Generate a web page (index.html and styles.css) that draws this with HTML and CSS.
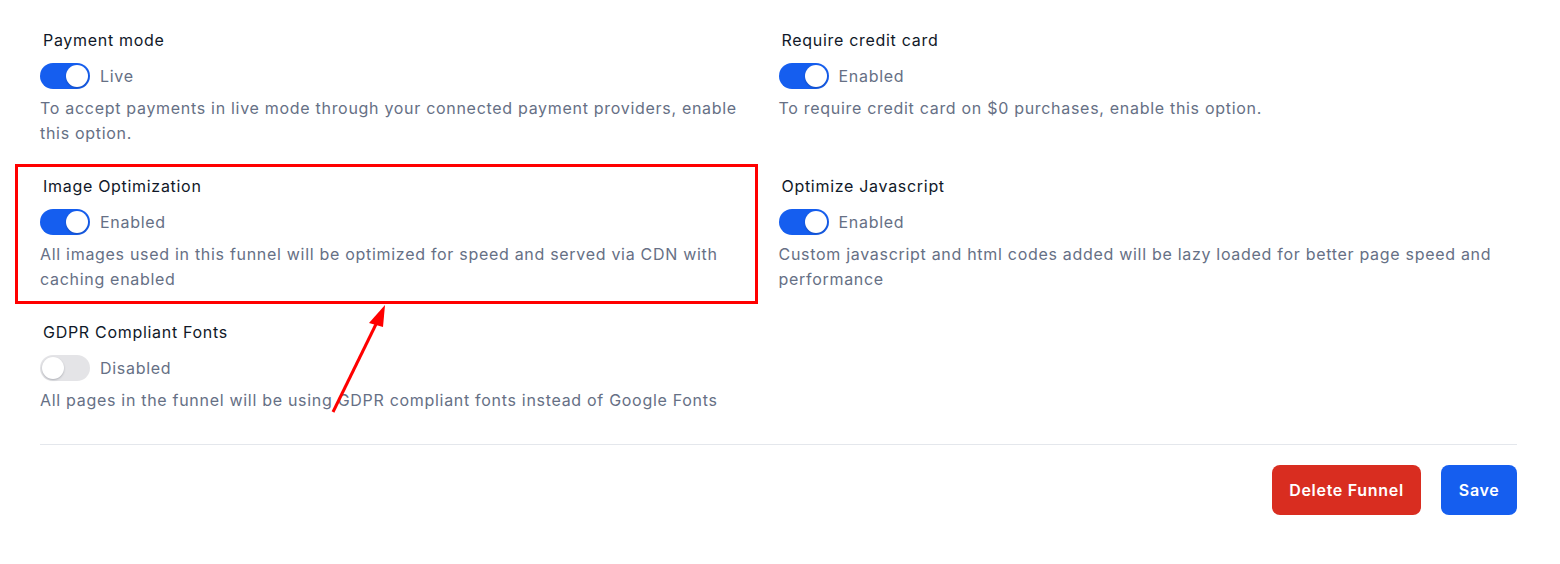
FILE: index.html
```html
<!DOCTYPE html>
<html lang="en">
<head>
<meta charset="utf-8">
<title>Funnel settings</title>
<link rel="stylesheet" href="styles.css">
</head>
<body>
<div class="page">
  <div class="settings">
    <div class="cell">
      <div class="title">Payment mode</div>
      <div class="switch-row"><span class="switch on"><span class="knob"></span></span><span class="state">Live</span></div>
      <p class="desc">To accept payments in live mode through your connected payment providers, enable this option.</p>
    </div>
    <div class="cell">
      <div class="title">Require credit card</div>
      <div class="switch-row"><span class="switch on"><span class="knob"></span></span><span class="state">Enabled</span></div>
      <p class="desc">To require credit card on $0 purchases, enable this option.</p>
    </div>
    <div class="cell highlighted">
      <div class="title">Image Optimization</div>
      <div class="switch-row"><span class="switch on"><span class="knob"></span></span><span class="state">Enabled</span></div>
      <p class="desc">All images used in this funnel will be optimized for speed and served via CDN with caching enabled</p>
      <span class="highlight-box"></span>
    </div>
    <div class="cell">
      <div class="title">Optimize Javascript</div>
      <div class="switch-row"><span class="switch on"><span class="knob"></span></span><span class="state">Enabled</span></div>
      <p class="desc">Custom javascript and html codes added will be lazy loaded for better page speed and performance</p>
    </div>
    <div class="cell">
      <div class="title">GDPR Compliant Fonts</div>
      <div class="switch-row"><span class="switch"><span class="knob"></span></span><span class="state">Disabled</span></div>
      <p class="desc">All pages in the funnel will be using GDPR compliant fonts instead of Google Fonts</p>
    </div>
  </div>
  <div class="footer">
    <button class="btn btn-danger">Delete Funnel</button>
    <button class="btn btn-primary">Save</button>
  </div>
  <svg class="arrow" width="80" height="130" viewBox="0 0 80 130">
    <line x1="13" y1="122" x2="60" y2="26" stroke="#ff0000" stroke-width="3"/>
    <polygon points="65,15 49,33 63,37" fill="#ff0000"/>
  </svg>
</div>
</body>
</html>
```
FILE: styles.css
```css
* { box-sizing: border-box; }
html, body { margin: 0; padding: 0; background: #ffffff; }
body {
  font-family: Inter, "Noto Sans", Arial, sans-serif;
  letter-spacing: 0.7px;
  width: 1560px;
  height: 564px;
  overflow: hidden;
}
.page {
  position: relative;
  padding: 28px 43px 0 40px;
}
.settings {
  display: grid;
  grid-template-columns: 1fr 1fr;
  row-gap: 28px;
}
.cell {
  position: relative;
  padding-right: 18px;
}
.title {
  font-size: 16px;
  line-height: 24px;
  color: #101828;
  padding-left: 3px;
}
.switch-row {
  display: flex;
  align-items: center;
  gap: 10px;
  margin-top: 11px;
  height: 26px;
}
.switch {
  position: relative;
  display: inline-block;
  width: 50px;
  height: 26px;
  border-radius: 13px;
  background: #e4e4e7;
}
.switch.on { background: #155eef; }
.knob {
  position: absolute;
  top: 2px;
  left: 2px;
  width: 22px;
  height: 22px;
  border-radius: 50%;
  background: #ffffff;
  box-shadow: 0 1px 2px rgba(16, 24, 40, 0.25);
}
.switch.on .knob { left: 26px; }
.state {
  font-size: 16px;
  color: #667085;
}
.desc {
  margin: 7px 0 0;
  font-size: 16px;
  line-height: 25px;
  color: #667085;
}
.highlight-box {
  position: absolute;
  left: -25px;
  top: -10px;
  width: 743px;
  height: 140px;
  border: 3px solid #ff0000;
  pointer-events: none;
}
.footer {
  margin-top: 31px;
  border-top: 1px solid #e4e7ec;
  padding-top: 20px;
  display: flex;
  justify-content: flex-end;
  gap: 20px;
}
.btn {
  font-family: inherit;
  font-size: 16px;
  font-weight: 600;
  letter-spacing: 0.7px;
  color: #ffffff;
  border: none;
  border-radius: 8px;
  height: 50px;
  padding: 0 17.5px;
}
.btn-danger { background: #d92d20; }
.btn-primary { background: #155eef; }
.arrow {
  position: absolute;
  left: 320px;
  top: 290px;
}
```
